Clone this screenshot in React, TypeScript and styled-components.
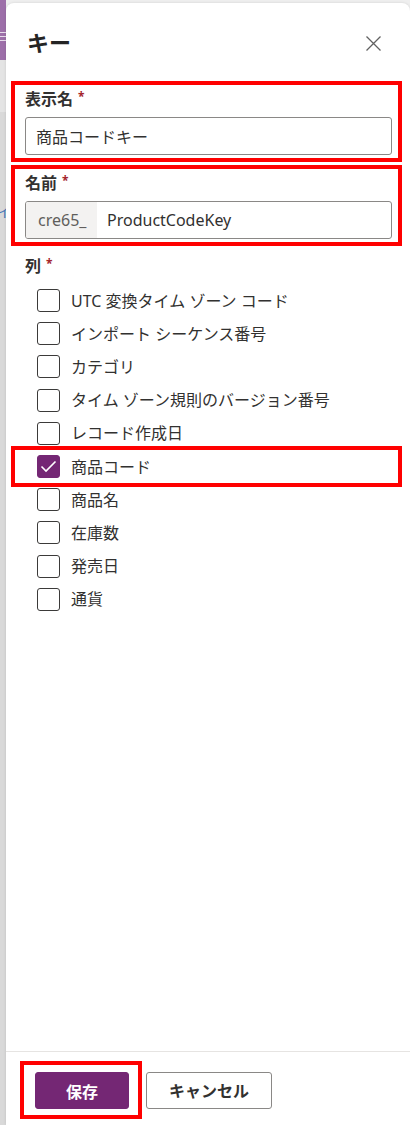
import React from "react";
import styled, { createGlobalStyle } from "styled-components";

const GlobalStyle = createGlobalStyle`
  html, body {
    margin: 0;
    padding: 0;
    background: #efefef;
  }
  body {
    font-family: "Segoe UI", "Noto Sans", "Noto Sans CJK JP", sans-serif;
    color: #323130;
  }
  * { box-sizing: border-box; }
`;

const Page = styled.div`
  display: flex;
  width: 410px;
  height: 1125px;
  overflow: hidden;
  background: #efefef;
`;

const SideStrip = styled.div`
  width: 6px;
  flex-shrink: 0;
  display: flex;
  flex-direction: column;
  background: #d9d9d9;
  overflow: hidden;
`;

const AppBarSliver = styled.div`
  height: 60px;
  background: #9d6fa9;
  display: flex;
  flex-direction: column;
  justify-content: center;
  gap: 3px;
  padding-top: 12px;
`;

const Dash = styled.span`
  display: block;
  height: 1px;
  width: 6px;
  background: #e8dcec;
`;

const StripGap = styled.div`
  height: 52px;
  background: #e4e4e4;
`;

const StripGlyph = styled.div`
  margin-top: 92px;
  margin-left: -3px;
  font-size: 14px;
  line-height: 16px;
  color: #4a7ab8;
`;

const Panel = styled.div`
  flex: 1;
  margin-top: 3px;
  background: #ffffff;
  border-radius: 8px 8px 0 0;
  display: flex;
  flex-direction: column;
  box-shadow: 0 0 3px rgba(0, 0, 0, 0.12);
`;

const Header = styled.div`
  display: flex;
  align-items: center;
  justify-content: space-between;
  padding: 24px 29px 0 21px;
`;

const Title = styled.h1`
  margin: 0;
  font-size: 22px;
  line-height: 30px;
  font-weight: 700;
  color: #242424;
`;

const CloseButton = styled.button`
  border: none;
  background: transparent;
  padding: 0;
  width: 16px;
  height: 16px;
  margin-top: 3px;
  display: flex;
  align-items: center;
  justify-content: center;
  color: #616161;
`;

const Body = styled.div`
  flex: 1;
  display: flex;
  flex-direction: column;
  padding: 24px 18px 0 19px;
`;

const FieldBox = styled.div<{ $gapTop?: number }>`
  border: 4px solid #ff0000;
  margin: ${(p) => p.$gapTop ?? 0}px -10px 0 -14px;
  padding: 3px 6px 3px 10px;
`;

const Label = styled.div<{ $gapTop?: number }>`
  font-size: 16px;
  line-height: 22px;
  font-weight: 700;
  color: #323130;
  margin-top: ${(p) => p.$gapTop ?? 0}px;
`;

const Required = styled.span`
  display: inline-block;
  color: #a4262c;
  font-size: 12px;
  line-height: 12px;
  vertical-align: top;
  padding-top: 3px;
  margin-left: 5px;
`;

const InputBox = styled.div`
  margin-top: 7px;
  height: 38px;
  border: 1px solid #8a8886;
  border-radius: 3px;
  display: flex;
  align-items: stretch;
  overflow: hidden;
  font-size: 16px;
  color: #323130;
`;

const Prefix = styled.span`
  width: 71px;
  background: #f3f2f1;
  color: #605e5c;
  display: flex;
  align-items: center;
  padding-left: 12px;
`;

const Value = styled.span`
  display: flex;
  align-items: center;
  padding-left: 10px;
`;

const List = styled.div`
  margin-top: 7px;
  display: flex;
  flex-direction: column;
`;

const Row = styled.label<{ $highlight?: boolean }>`
  display: flex;
  align-items: center;
  gap: 11px;
  height: 33.2px;
  margin: 0 -6px 0 -10px;
  padding-left: 22px;
  outline: ${(p) => (p.$highlight ? "4px solid #ff0000" : "none")};
  font-size: 16px;
  line-height: 22px;
  color: #323130;
`;

const Box = styled.span<{ $checked?: boolean }>`
  width: 23px;
  height: 23px;
  flex-shrink: 0;
  border-radius: 3px;
  border: 1.5px solid ${(p) => (p.$checked ? "#742774" : "#3b3a39")};
  background: ${(p) => (p.$checked ? "#742774" : "#ffffff")};
  display: flex;
  align-items: center;
  justify-content: center;
`;

const Footer = styled.div`
  border-top: 1px solid #e6e4e2;
  display: flex;
  align-items: center;
  padding: 9px 0 6px 14px;
`;

const SaveHighlight = styled.div`
  border: 4px solid #ff0000;
  padding: 7px 9px 6px 11px;
`;

const Button = styled.button<{ $primary?: boolean }>`
  height: 37px;
  width: ${(p) => (p.$primary ? 94 : 126)}px;
  margin-left: ${(p) => (p.$primary ? 0 : 4)}px;
  border-radius: 3px;
  border: 1px solid ${(p) => (p.$primary ? "#742774" : "#8a8886")};
  background: ${(p) => (p.$primary ? "#742774" : "#ffffff")};
  color: ${(p) => (p.$primary ? "#ffffff" : "#323130")};
  font-family: inherit;
  font-size: 16px;
  font-weight: 700;
  padding: 0;
`;

const columns = [
  "UTC 変換タイム ゾーン コード",
  "インポート シーケンス番号",
  "カテゴリ",
  "タイム ゾーン規則のバージョン番号",
  "レコード作成日",
  "商品コード",
  "商品名",
  "在庫数",
  "発売日",
  "通貨",
];

export default function App() {
  return (
    <>
      <GlobalStyle />
      <Page>
        <SideStrip>
          <AppBarSliver>
            <Dash />
            <Dash />
            <Dash />
          </AppBarSliver>
          <StripGap />
          <StripGlyph>イ</StripGlyph>
        </SideStrip>
        <Panel>
          <Header>
            <Title>キー</Title>
            <CloseButton aria-label="閉じる">
              <svg width="15" height="15" viewBox="0 0 15 15">
                <path d="M0.5 0.5 L14.5 14.5 M14.5 0.5 L0.5 14.5" stroke="currentColor" strokeWidth="1.3" fill="none" />
              </svg>
            </CloseButton>
          </Header>
          <Body>
            <FieldBox>
              <Label>
                表示名<Required>*</Required>
              </Label>
              <InputBox>
                <Value>商品コードキー</Value>
              </InputBox>
            </FieldBox>
            <FieldBox $gapTop={3}>
              <Label>
                名前<Required>*</Required>
              </Label>
              <InputBox>
                <Prefix>cre65_</Prefix>
                <Value>ProductCodeKey</Value>
              </InputBox>
            </FieldBox>
            <Label $gapTop={9}>
              列<Required>*</Required>
            </Label>
            <List>
              {columns.map((c) => {
                const checked = c === "商品コード";
                return (
                  <Row key={c} $highlight={checked}>
                    <Box $checked={checked}>
                      {checked && (
                        <svg width="17" height="13" viewBox="0 0 17 13">
                          <path d="M1.5 6.5 L6 11 L15.5 1.5" stroke="#ffffff" strokeWidth="1.6" fill="none" />
                        </svg>
                      )}
                    </Box>
                    {c}
                  </Row>
                );
              })}
            </List>
          </Body>
          <Footer>
            <SaveHighlight>
              <Button $primary>保存</Button>
            </SaveHighlight>
            <Button>キャンセル</Button>
          </Footer>
        </Panel>
      </Page>
    </>
  );
}
